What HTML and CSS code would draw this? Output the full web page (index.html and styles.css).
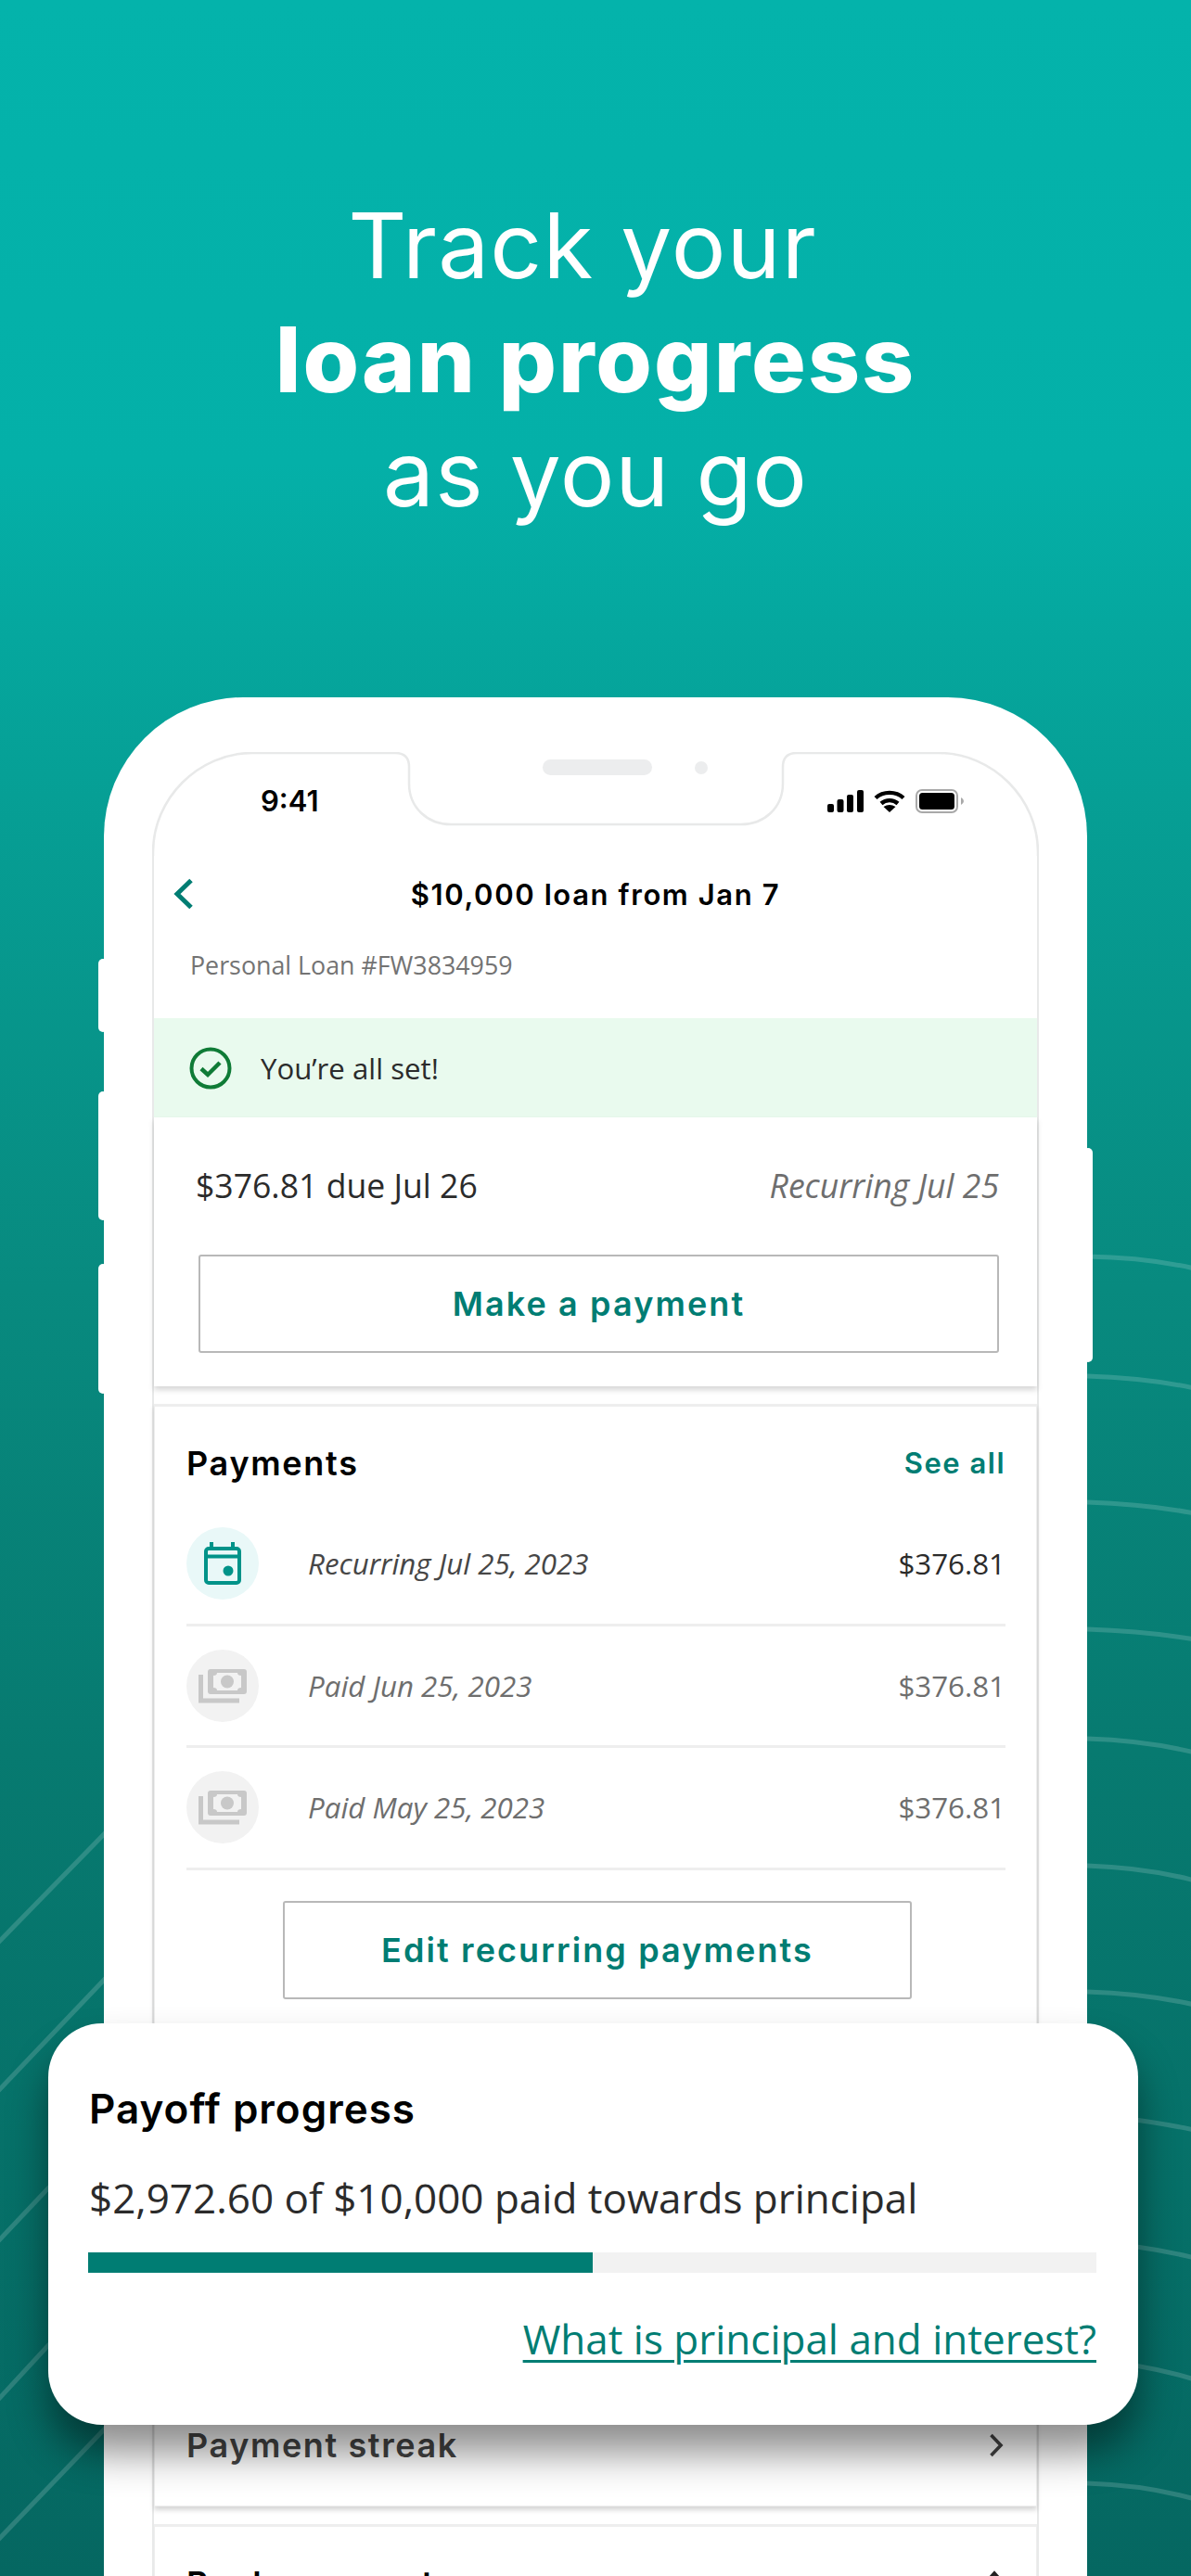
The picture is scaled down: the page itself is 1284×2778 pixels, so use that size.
FILE: index.html
```html
<!DOCTYPE html>
<html lang="en">
<head>
    <meta charset="UTF-8">
    <meta name="viewport" content="width=device-width, initial-scale=1.0">
    <title>Track your loan progress</title>
    <link rel="stylesheet" href="styles.css">
</head>
<body>
<div class="page">

    <!-- Линии на фоне -->
    <svg class="bg-lines" width="1284" height="2778" viewBox="0 0 1284 2778" fill="none">
        <g stroke="#fff" stroke-opacity="0.16" stroke-width="5">
            <path d="M-4 2097L116 1974"/>
            <path d="M-4 2257L116 2131"/>
            <path d="M-4 2419L116 2292"/>
            <path d="M-4 2590L116 2460"/>
            <path d="M-4 2741L116 2616"/>
        </g>
        <g stroke="#fff" stroke-opacity="0.16" stroke-width="5">
            <path d="M1172 1355Q1235 1356 1288 1368"/>
            <path d="M1172 1484Q1235 1486 1288 1497"/>
            <path d="M1172 1620Q1235 1622 1288 1632"/>
            <path d="M1172 1757Q1235 1759 1288 1768"/>
            <path d="M1172 1875Q1235 1877 1288 1890"/>
            <path d="M1172 2012Q1235 2014 1288 2028"/>
            <path d="M1172 2148Q1235 2150 1288 2162"/>
            <path d="M1172 2280Q1235 2286 1288 2297"/>
            <path d="M1172 2417Q1235 2422 1288 2435"/>
            <path d="M1172 2544Q1235 2550 1288 2566"/>
            <path d="M1172 2678Q1235 2680 1288 2695"/>
        </g>
    </svg>

    <h1 class="headline">
        <span class="hl-line hl-1">Track your</span>
        <b class="hl-line hl-2">loan progress</b>
        <span class="hl-line hl-3">as you go</span>
    </h1>

    <div class="phone">
        <!-- Кнопки корпуса -->
        <i class="side-btn btn-l1"></i>
        <i class="side-btn btn-l2"></i>
        <i class="side-btn btn-l3"></i>
        <i class="side-btn btn-r1"></i>

        <div class="screen">
            <svg class="notch" width="956" height="112" viewBox="0 0 956 112" fill="none">
                <path d="M1 112V108C1 50 50 1 108 1H262Q277 1 277 16V34C277 60 297 78 322 78H635C660 78 680 60 680 34V16Q680 1 695 1H848C906 1 955 50 955 108V112" stroke="#e8e9e9" stroke-width="2.5"/>
                <rect x="421" y="8" width="118" height="17" rx="8.5" fill="#ecedee"/>
                <circle cx="592" cy="17" r="7" fill="#ecedee"/>
            </svg>

            <div class="status-bar">
                <span class="clock">9:41</span>
                <div class="status-icons">
                    <svg width="39" height="24" viewBox="0 0 39 24" fill="#000">
                        <rect x="0" y="15" width="7" height="9" rx="2"/>
                        <rect x="10.5" y="10" width="7" height="14" rx="2"/>
                        <rect x="21" y="5" width="7" height="19" rx="2"/>
                        <rect x="32" y="0" width="7" height="24" rx="2"/>
                    </svg>
                    <svg width="34" height="24" viewBox="0 0 34 24" fill="none">
                        <path d="M2 8.5C10 1 24 1 32 8.5" stroke="#000" stroke-width="4.4"/>
                        <path d="M8 14.5C13 10 21 10 26 14.5" stroke="#000" stroke-width="4.4"/>
                        <path d="M17 24L10.5 18Q17 14 23.5 18Z" fill="#000"/>
                    </svg>
                    <svg class="battery" width="54" height="26" viewBox="0 0 54 26" fill="none">
                        <rect x="1" y="1" width="44" height="24" rx="6" stroke="#a9a9a9" stroke-width="2"/>
                        <rect x="4" y="4" width="38" height="18" rx="3.5" fill="#000"/>
                        <path d="M49 9Q52 10.5 52 13T49 17Z" fill="#a9a9a9"/>
                    </svg>
                </div>
            </div>

            <div class="nav-bar">
                <svg class="back" width="22" height="34" viewBox="0 0 22 34" fill="none">
                    <path d="M19 2.5L4 17L19 31.5" stroke="#007d73" stroke-width="5"/>
                </svg>
                <span class="nav-title">$10,000 loan from Jan 7</span>
            </div>

            <div class="loan-number">Personal Loan #FW3834959</div>

            <div class="alert">
                <svg width="46" height="46" viewBox="0 0 46 46" fill="none">
                    <circle cx="23" cy="23" r="20.5" stroke="#0f7b36" stroke-width="4"/>
                    <path d="M13 23.5L20 30L33 17" stroke="#0f7b36" stroke-width="4.5"/>
                </svg>
                <span>You’re all set!</span>
            </div>

            <section class="card card-top">
                <div class="due-row">
                    <span class="due-amount">$376.81 due Jul 26</span>
                    <span class="due-recurring">Recurring Jul 25</span>
                </div>
                <button class="btn btn-pay">Make a payment</button>
            </section>

            <section class="card card-payments">
                <div class="card-head">
                    <h2>Payments</h2>
                    <a class="see-all">See all</a>
                </div>

                <div class="pay-row current">
                    <span class="pay-icon teal">
                        <svg width="40" height="46" viewBox="0 0 40 46" fill="none">
                            <path d="M8 0V7M31 0V7" stroke="#009389" stroke-width="4"/>
                            <rect x="2" y="7" width="36" height="37" rx="3" stroke="#009389" stroke-width="4"/>
                            <path d="M2 15.5H38" stroke="#009389" stroke-width="4"/>
                            <circle cx="26" cy="31" r="5.5" fill="#009389"/>
                        </svg>
                    </span>
                    <span class="pay-label">Recurring Jul 25, 2023</span>
                    <span class="pay-sum dark">$376.81</span>
                </div>

                <div class="pay-row">
                    <span class="pay-icon gray">
                        <svg width="52" height="38" viewBox="0 0 52 38" fill="none">
                            <path d="M2.5 7V35H44" stroke="#c8c8c8" stroke-width="5"/>
                            <path fill-rule="evenodd" d="M13 1H49Q52 1 52 4V25Q52 28 49 28H13Q10 28 10 25V4Q10 1 13 1ZM20 5Q20 8 16 8V21Q20 21 20 24H42Q42 21 46 21V8Q42 8 42 5Z" fill="#c8c8c8"/>
                            <circle cx="31" cy="14.5" r="7" fill="#c8c8c8"/>
                        </svg>
                    </span>
                    <span class="pay-label">Paid Jun 25, 2023</span>
                    <span class="pay-sum">$376.81</span>
                </div>

                <div class="pay-row">
                    <span class="pay-icon gray">
                        <svg width="52" height="38" viewBox="0 0 52 38" fill="none">
                            <path d="M2.5 7V35H44" stroke="#c8c8c8" stroke-width="5"/>
                            <path fill-rule="evenodd" d="M13 1H49Q52 1 52 4V25Q52 28 49 28H13Q10 28 10 25V4Q10 1 13 1ZM20 5Q20 8 16 8V21Q20 21 20 24H42Q42 21 46 21V8Q42 8 42 5Z" fill="#c8c8c8"/>
                            <circle cx="31" cy="14.5" r="7" fill="#c8c8c8"/>
                        </svg>
                    </span>
                    <span class="pay-label">Paid May 25, 2023</span>
                    <span class="pay-sum">$376.81</span>
                </div>

                <button class="btn btn-edit">Edit recurring payments</button>

                <div class="streak-row">
                    <span>Payment streak</span>
                    <svg width="16" height="26" viewBox="0 0 16 26" fill="none">
                        <path d="M2.5 2L13 13L2.5 24" stroke="#444" stroke-width="3.6"/>
                    </svg>
                </div>
            </section>

            <section class="card card-bank">
                <div class="bank-row">
                    <span>Bank payment</span>
                    <svg width="24" height="16" viewBox="0 0 24 16" fill="none">
                        <path d="M2 14L12 3L22 14" stroke="#222" stroke-width="3.6"/>
                    </svg>
                </div>
            </section>
        </div>
    </div>

    <!-- Карточка поверх телефона -->
    <div class="progress-card">
        <h3>Payoff progress</h3>
        <p>$2,972.60 of $10,000 paid towards principal</p>
        <div class="progress-track">
            <div class="progress-fill" style="width: 50%"></div>
        </div>
        <a class="progress-link">What is principal and interest?</a>
    </div>

</div>
</body>
</html>
```

FILE: styles.css
```css
/* Основные стили */
* {
    box-sizing: border-box;
}

html, body {
    margin: 0;
    padding: 0;
}

body {
    font-family: 'Open Sans', sans-serif;
    color: #2b2b2b;
}

.page {
    position: relative;
    width: 1284px;
    height: 2778px;
    overflow: hidden;
    background: linear-gradient(180deg, #04b3ab 0%, #04b0a8 18%, #06a096 30%, #088a7f 50%, #077a70 68%, #056761 100%);
}

.bg-lines {
    position: absolute;
    top: 0;
    left: 0;
}

/* Заголовок */
.headline {
    position: relative;
    margin: 0;
    padding-top: 203px;
    text-align: center;
    color: #fff;
    font-family: 'Inter', sans-serif;
    font-weight: 400;
    height: 752px;
}

.hl-line {
    display: block;
    height: 123px;
    line-height: 123px;
    font-size: 98px;
}

.hl-1 {
    padding-right: 28px;
    font-weight: 400;
    letter-spacing: 1.2px;
}

.hl-2 {
    font-weight: 800;
    letter-spacing: 2px;
}

.hl-3 {
    font-weight: 400;
    letter-spacing: 0.8px;
}

/* Телефон */
.phone {
    position: relative;
    width: 1060px;
    height: 2100px;
    margin-left: 112px;
    padding: 59px 52px 0;
    background: #fff;
    border-radius: 150px 150px 0 0;
}

.side-btn {
    position: absolute;
    width: 10px;
    background: #fff;
    border-radius: 6px;
}

.btn-l1 { left: -6px; top: 282px; height: 79px; }
.btn-l2 { left: -6px; top: 425px; height: 139px; }
.btn-l3 { left: -6px; top: 611px; height: 140px; }
.btn-r1 { right: -6px; top: 486px; height: 231px; }

.screen {
    position: relative;
    width: 956px;
    height: 2100px;
    border-left: 2px solid #e8e9e9;
    border-right: 2px solid #e8e9e9;
}

.notch {
    position: absolute;
    top: 0;
    left: -2px;
    background: #fff;
}

.status-bar {
    position: relative;
    display: flex;
    justify-content: space-between;
    align-items: center;
    height: 119px;
    padding: 0 77px 14px 115px;
}

.clock {
    font-family: 'Inter', sans-serif;
    font-size: 31px;
    font-weight: 600;
    color: #000;
}

.status-icons {
    display: flex;
    align-items: center;
    gap: 11px;
}

.nav-bar {
    position: relative;
    display: flex;
    justify-content: center;
    align-items: center;
    height: 68px;
}

.back {
    position: absolute;
    left: 21px;
    top: 17px;
}

.nav-title {
    font-family: 'Inter', sans-serif;
    font-size: 31px;
    font-weight: 600;
    letter-spacing: 1.6px;
    color: #000;
}

.loan-number {
    height: 100px;
    padding: 24px 0 0 39px;
    font-size: 26.8px;
    line-height: 38px;
    color: #737373;
}

.alert {
    display: flex;
    align-items: center;
    gap: 31px;
    height: 107px;
    padding-left: 38px;
    background: #e9faee;
    font-size: 31.2px;
    color: #2b2b2b;
}

/* Карточки */
.card {
    background: #fff;
}

.card-top {
    height: 290px;
    padding: 0 41px 0 48px;
    box-shadow: 0 4px 6px rgba(0, 0, 0, 0.16);
}

.due-row {
    display: flex;
    justify-content: space-between;
    align-items: center;
    height: 146px;
    margin-bottom: 2px;
    margin-left: -3px;
}

.due-amount,
.due-recurring {
    font-size: 35.6px;
}

.due-recurring {
    font-style: italic;
    color: #6e6e6e;
}

.btn {
    display: block;
    background: #fff;
    border: 2px solid #b8b8b8;
    border-radius: 3px;
    color: #007d73;
    font-family: 'Inter', sans-serif;
    font-weight: 600;
    font-size: 36px;
    letter-spacing: 2.1px;
}

.btn-pay {
    width: 100%;
    height: 106px;
}

.card-payments {
    height: 1189px;
    margin-top: 19px;
    padding: 0 33px 0 34px;
    border-top: 3px solid #eeeeee;
    border-left: 1px solid #eeeeee;
    border-right: 1px solid #eeeeee;
    border-bottom: 1px solid #eeeeee;
    box-shadow: 0 4px 5px rgba(0, 0, 0, 0.16);
}

.card-head {
    display: flex;
    justify-content: space-between;
    align-items: center;
    height: 105px;
    padding-top: 16px;
}

.card-head h2 {
    margin: 0;
    font-family: 'Inter', sans-serif;
    font-size: 36px;
    font-weight: 600;
    letter-spacing: 1.7px;
    color: #000;
}

.see-all {
    font-family: 'Inter', sans-serif;
    font-size: 31px;
    font-weight: 600;
    letter-spacing: 1.5px;
    color: #007d73;
}

.pay-row {
    display: flex;
    align-items: center;
    height: 131.5px;
    border-bottom: 3px solid #eeeeee;
    font-size: 31.3px;
}

.pay-icon {
    display: flex;
    justify-content: center;
    align-items: center;
    flex: none;
    width: 78px;
    height: 78px;
    border-radius: 50%;
}

.pay-icon.teal { background: #e9f8f8; }
.pay-icon.gray { background: #f2f2f2; }

.pay-label {
    flex: 1;
    margin-left: 53px;
    font-style: italic;
    color: #6e6e6e;
}

.pay-row.current .pay-label {
    color: #464646;
}

.pay-sum {
    color: #6e6e6e;
}

.pay-sum.dark {
    color: #2b2b2b;
}

.btn-edit {
    width: 678px;
    height: 106px;
    margin: 33px 0 0 104px;
}

.streak-row {
    display: flex;
    justify-content: space-between;
    align-items: center;
    margin-top: 459px;
    padding-right: 2px;
    font-family: 'Inter', sans-serif;
    font-size: 36px;
    font-weight: 600;
    letter-spacing: 1.6px;
    color: #444;
}

.card-bank {
    margin-top: 19px;
    height: 200px;
    padding: 39px 33px 0 34px;
    border-top: 3px solid #eeeeee;
    border-left: 1px solid #eeeeee;
    border-right: 1px solid #eeeeee;
}

.bank-row {
    display: flex;
    justify-content: space-between;
    align-items: flex-start;
    font-family: 'Inter', sans-serif;
    font-size: 36px;
    font-weight: 600;
    letter-spacing: 1.6px;
    color: #000;
}

.bank-row svg {
    margin-top: 8px;
}

/* Нижняя карточка */
.progress-card {
    position: absolute;
    left: 52px;
    top: 2182px;
    width: 1175px;
    height: 433px;
    padding: 62px 45px 0 44px;
    background: #fff;
    border-radius: 58px;
    box-shadow: 0 30px 44px rgba(0, 0, 0, 0.45);
}

.progress-card h3 {
    margin: 0;
    font-family: 'Inter', sans-serif;
    font-size: 44px;
    font-weight: 600;
    letter-spacing: 1px;
    line-height: 60px;
    color: #000;
}

.progress-card p {
    margin: 35px 0 0;
    font-size: 44px;
    line-height: 62px;
    color: #2b2b2b;
}

.progress-track {
    height: 22px;
    margin-top: 28px;
    margin-left: -1px;
    background: #f2f2f2;
}

.progress-fill {
    height: 100%;
    background: #007d73;
}

.progress-link {
    display: block;
    margin-top: 41px;
    font-size: 44px;
    line-height: 60px;
    text-align: right;
    color: #007d73;
    text-decoration: underline;
    text-decoration-thickness: 3px;
    text-underline-offset: 6px;
}
```
